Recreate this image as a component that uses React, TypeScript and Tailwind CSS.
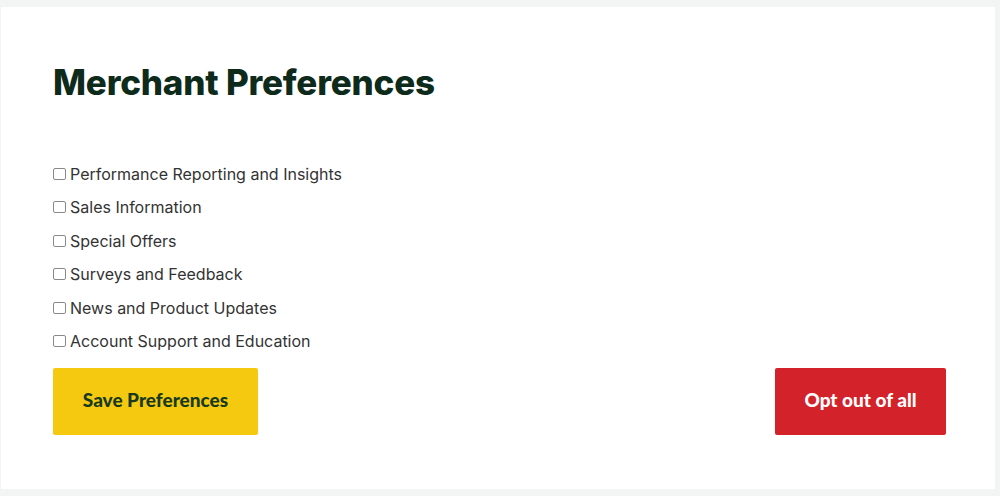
const items = [
  "Performance Reporting and Insights",
  "Sales Information",
  "Special Offers",
  "Surveys and Feedback",
  "News and Product Updates",
  "Account Support and Education",
];

export default function App() {
  return (
    <div className="h-[496px] w-[1000px] bg-[#f3f5f4] pt-[7px] pl-px pr-[5px] pb-[7px]">
      <div className="h-full w-full bg-white pl-[52px] pr-[49px] pt-[50px]">
        {/* 헤더 */}
        <h1 className="font-['Inter',sans-serif] text-[35px] font-extrabold leading-[50px] tracking-[-0.2px] text-[#0e2a1a]">
          Merchant Preferences
        </h1>

        {/* 체크박스 목록 */}
        <div className="mt-[50px] flex flex-col">
          {items.map((label) => (
            <label
              key={label}
              className="flex h-[33.5px] items-center gap-[4px] font-['Inter',sans-serif] text-[16px] text-[#333333]"
            >
              <span className="h-[12px] w-[13px] rounded-[2px] border border-[#8a8a8a] bg-white"></span>
              <span>{label}</span>
            </label>
          ))}
        </div>

        {/* 버튼 */}
        <div className="mt-[10px] flex items-center justify-between">
          <button className="flex h-[67px] w-[205px] items-center justify-center rounded-[2px] bg-[#f4c90f] pb-[3px] font-['Lato',sans-serif] text-[19px] font-black text-[#173a1e]">
            Save Preferences
          </button>
          <button className="flex h-[67px] w-[171px] items-center justify-center rounded-[2px] bg-[#d3222a] pb-[3px] font-['Lato',sans-serif] text-[19px] font-black text-white">
            Opt out of all
          </button>
        </div>
      </div>
    </div>
  );
}
